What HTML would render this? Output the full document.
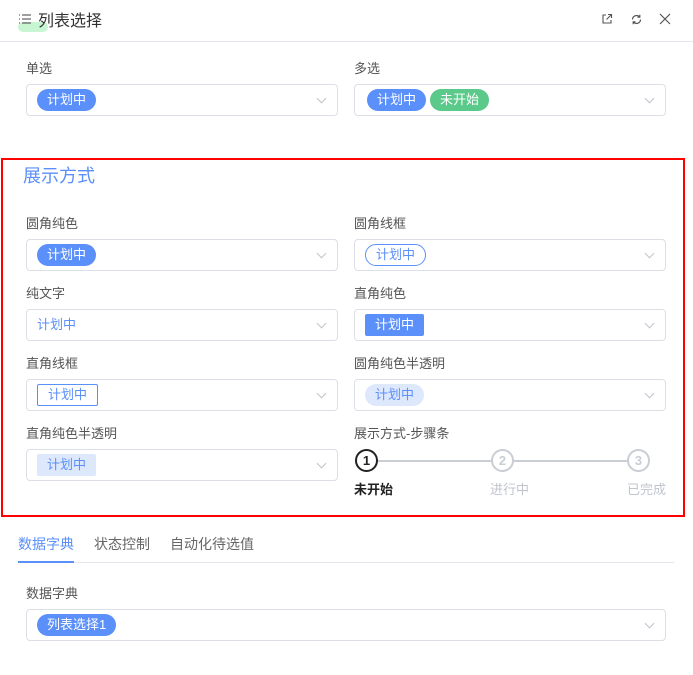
<!DOCTYPE html>
<html><head><meta charset="utf-8"><style>
*{box-sizing:border-box;margin:0;padding:0}
body{width:693px;height:675px;background:#fff;font-family:"Liberation Sans","Noto Sans CJK SC",sans-serif;position:relative;overflow:hidden;color:#333}
.a{position:absolute}
.lbl{position:absolute;font-size:13px;color:#555;line-height:16px}
.box{position:absolute;width:312px;height:32px;border:1px solid #dcdfe6;border-radius:4px}
.box::after{content:"";position:absolute;right:12px;top:10px;width:6px;height:6px;border-right:1px solid #c0c4cc;border-bottom:1px solid #c0c4cc;transform:rotate(45deg)}
.tag{position:absolute;top:4px;height:22px;line-height:22px;font-size:13px;padding:0 10px;color:#fff;background:#5b8ff9;border-radius:11px}
.step{position:absolute;width:23px;height:23px;border-radius:50%;border:2px solid #c9cdd4;color:#c9cdd4;font-size:13px;font-weight:bold;text-align:center;line-height:19px;background:#fff}
</style></head><body>
<!-- header -->
<div class="a" style="left:18px;top:22px;width:30px;height:10px;background:#c8f5d2;border-radius:5px"></div>
<svg class="a" style="left:18px;top:12px" width="14" height="14" viewBox="0 0 14 14" stroke="#666" stroke-width="1.2"><path d="M1 3h1M1 7h1M1 11h1M4 3h9M4 7h9M4 11h9"/></svg>
<div class="a" style="left:38px;top:7px;font-size:16px;color:#333">列表选择</div>
<svg class="a" style="left:601px;top:13px" width="12" height="12" viewBox="0 0 12 12" fill="none" stroke="#555" stroke-width="1.1"><path d="M5 2H2v8h8V7M7 1.5h3.5V5M10.5 1.5L5.5 6.5"/></svg>
<svg class="a" style="left:630px;top:13px" width="13" height="13" viewBox="0 0 13 13" fill="none" stroke="#555" stroke-width="1.2"><path d="M2.5 6.5a4 4 0 0 1 7-2.6M10.5 6.5a4 4 0 0 1-7 2.6M9.8 1.8v2.3H7.5M3.2 11.2V8.9h2.3"/></svg>
<svg class="a" style="left:659px;top:13px" width="12" height="12" viewBox="0 0 12 12" stroke="#555" stroke-width="1.2"><path d="M1 1l10 10M11 1L1 11"/></svg>
<div class="a" style="left:0;top:41px;width:693px;height:1px;background:#e4e6eb"></div>

<div class="lbl" style="left:26px;top:61px">单选</div>
<div class="box" style="left:26px;top:84px"><span class="tag" style="left:10px">计划中</span></div>
<div class="lbl" style="left:354px;top:61px">多选</div>
<div class="box" style="left:354px;top:84px"><span class="tag" style="left:12px">计划中</span><span class="tag" style="left:75px;background:#5ac98a">未开始</span></div>

<!-- section -->
<div class="a" style="left:1px;top:158px;width:684px;height:359px;border:2px solid #f00"></div>
<div class="a" style="left:23px;top:162px;font-size:18px;color:#5b8ff9">展示方式</div>

<div class="lbl" style="left:26px;top:216px">圆角纯色</div>
<div class="box" style="left:26px;top:239px"><span class="tag" style="left:10px">计划中</span></div>
<div class="lbl" style="left:354px;top:216px">圆角线框</div>
<div class="box" style="left:354px;top:239px"><span class="tag" style="left:10px;background:#fff;color:#5b8ff9;border:1px solid #5b8ff9;line-height:20px">计划中</span></div>

<div class="lbl" style="left:26px;top:286px">纯文字</div>
<div class="box" style="left:26px;top:309px"><span class="tag" style="left:0;background:none;color:#5b8ff9">计划中</span></div>
<div class="lbl" style="left:354px;top:286px">直角纯色</div>
<div class="box" style="left:354px;top:309px"><span class="tag" style="left:10px;border-radius:2px">计划中</span></div>

<div class="lbl" style="left:26px;top:356px">直角线框</div>
<div class="box" style="left:26px;top:379px"><span class="tag" style="left:10px;border-radius:2px;background:#fff;color:#5b8ff9;border:1px solid #5b8ff9;line-height:20px">计划中</span></div>
<div class="lbl" style="left:354px;top:356px">圆角纯色半透明</div>
<div class="box" style="left:354px;top:379px"><span class="tag" style="left:10px;background:#dde8fd;color:#5b8ff9">计划中</span></div>

<div class="lbl" style="left:26px;top:426px">直角纯色半透明</div>
<div class="box" style="left:26px;top:449px"><span class="tag" style="left:10px;border-radius:2px;background:#dde8fd;color:#5b8ff9">计划中</span></div>
<div class="lbl" style="left:354px;top:426px">展示方式-步骤条</div>
<div class="a" style="left:376px;top:460px;width:254px;height:2px;background:#c9cdd4"></div>
<div class="step" style="left:355px;top:449px;border-color:#222;color:#222">1</div>
<div class="step" style="left:491px;top:449px">2</div>
<div class="step" style="left:627px;top:449px">3</div>
<div class="a" style="left:354px;top:479px;font-size:13px;color:#222;font-weight:bold">未开始</div>
<div class="a" style="left:490px;top:479px;font-size:13px;color:#c0c4cc">进行中</div>
<div class="a" style="left:627px;top:479px;font-size:13px;color:#c0c4cc">已完成</div>

<!-- tabs -->
<div class="a" style="left:18px;top:534px;font-size:14px;color:#5b8ff9">数据字典</div>
<div class="a" style="left:94px;top:534px;font-size:14px;color:#666">状态控制</div>
<div class="a" style="left:170px;top:534px;font-size:14px;color:#666">自动化待选值</div>
<div class="a" style="left:18px;top:562px;width:656px;height:1px;background:#e4e6eb"></div>
<div class="a" style="left:18px;top:561px;width:56px;height:2px;background:#5b8ff9"></div>

<div class="lbl" style="left:26px;top:586px">数据字典</div>
<div class="box" style="left:26px;top:609px;width:640px"><span class="tag" style="left:10px">列表选择1</span></div>
</body></html>
